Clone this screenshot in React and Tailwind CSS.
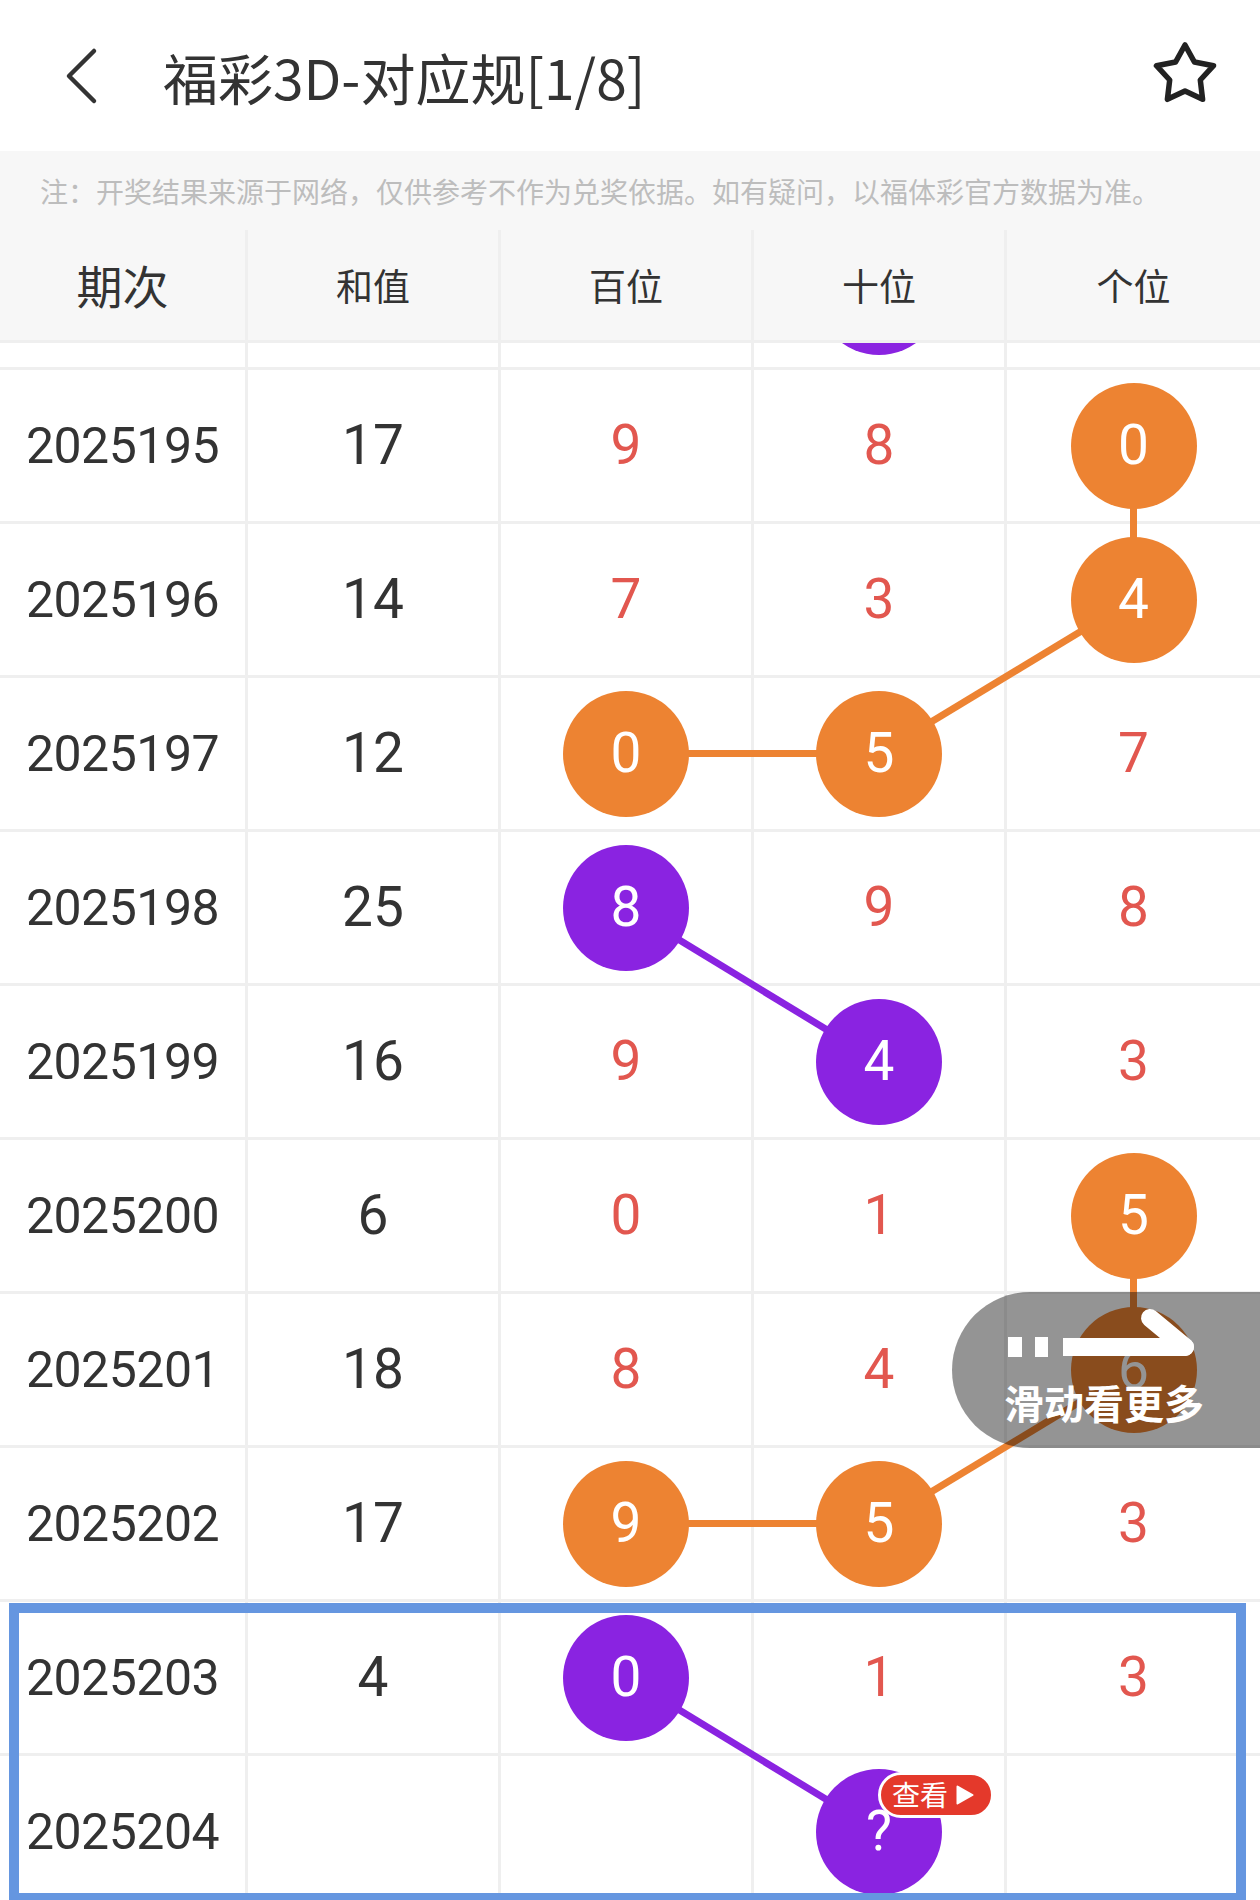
const CJK = "font-['Noto_Sans_CJK_SC',sans-serif]";
const NUM = "font-['Roboto','Noto_Sans_CJK_SC',sans-serif]";

// first row is scrolled under the header: only the bottom of its ball shows
const rows = [
  { id: "", key: "2025194", sum: "", cells: ["", { v: "", c: "p" }, ""] },
  { id: "2025195", sum: "17", cells: ["9", "8", { v: "0", c: "o" }] },
  { id: "2025196", sum: "14", cells: ["7", "3", { v: "4", c: "o" }] },
  { id: "2025197", sum: "12", cells: [{ v: "0", c: "o" }, { v: "5", c: "o" }, "7"] },
  { id: "2025198", sum: "25", cells: [{ v: "8", c: "p" }, "9", "8"] },
  { id: "2025199", sum: "16", cells: ["9", { v: "4", c: "p" }, "3"] },
  { id: "2025200", sum: "6", cells: ["0", "1", { v: "5", c: "o" }] },
  { id: "2025201", sum: "18", cells: ["8", "4", { v: "6", c: "o" }] },
  { id: "2025202", sum: "17", cells: [{ v: "9", c: "o" }, { v: "5", c: "o" }, "3"] },
  { id: "2025203", sum: "4", cells: [{ v: "0", c: "p" }, "1", "3"] },
  { id: "2025204", sum: "", cells: ["", { v: "?", c: "p", badge: true }, ""] },
];

// column centres and row pitch of the chart
const colX = [122.5, 373, 626, 879, 1133.5];
const rowY = (i) => 75.5 + 154 * i;

const links = [
  [4, 1, 4, 2, "o"],
  [4, 2, 3, 3, "o"],
  [3, 3, 2, 3, "o"],
  [2, 4, 3, 5, "p"],
  [4, 6, 4, 7, "o"],
  [4, 7, 3, 8, "o"],
  [3, 8, 2, 8, "o"],
  [2, 9, 3, 10, "p"],
];

const Ball = ({ v, c, badge }) => (
  <div
    className={`relative w-[126px] h-[126px] rounded-full flex items-center justify-center text-white text-[55px] leading-none ${
      c === "o" ? "bg-[#ed8332]" : "bg-[#8a23e1]"
    }`}
  >
    {v}
    {badge && (
      <div className="absolute left-[62px] top-[3px] w-[116px] h-[46px] rounded-full bg-[#e4392b] border-[3px] border-white flex items-center pl-[11px] gap-[8px]">
        <span className={`${CJK} text-[28px] leading-[1.2] text-white`}>查看</span>
        <svg width="18" height="20" viewBox="0 0 18 20">
          <path d="M1.5 1.5 L16.5 10 L1.5 18.5 Z" fill="#fff" stroke="#fff" strokeWidth="2" strokeLinejoin="round" />
        </svg>
      </div>
    )}
  </div>
);

const Cell = ({ children, last }) => (
  <div
    className={`flex items-center justify-center ${
      last ? "" : "border-r-[3px] border-[#efefef]"
    }`}
  >
    {children}
  </div>
);

export default function App() {
  return (
    <div className="relative w-[1260px] h-[1900px] overflow-hidden bg-white">
      {/* Header */}
      <div className="h-[151px] flex items-center pl-[60px] pr-[40px]">
        <svg width="40" height="60" viewBox="0 0 40 60">
          <path
            d="M34 5 L9 30 L34 55"
            fill="none"
            stroke="#333"
            strokeWidth="4.5"
            strokeLinecap="round"
            strokeLinejoin="round"
          />
        </svg>
        <div className={`${CJK} ml-[63px] text-[55px] leading-[1.2] text-[#333]`}>
          福彩3D-对应规[1/8]
        </div>
        <svg className="ml-auto mb-[6px]" width="70" height="70" viewBox="0 0 70 70">
          <polygon
            points="35,7 44.4,24 63.5,27.7 50.3,42 52.6,61.3 35,53 17.4,61.3 19.7,42 6.5,27.7 25.6,24"
            fill="none"
            stroke="#222"
            strokeWidth="5.5"
            strokeLinejoin="round"
          />
        </svg>
      </div>

      {/* Notice + table head */}
      <div className="bg-[#f7f7f7]">
        <div className={`${CJK} h-[79px] flex items-center pl-[40px] text-[28px] text-[#bdbdbd]`}>
          注：开奖结果来源于网络，仅供参考不作为兑奖依据。如有疑问，以福体彩官方数据为准。
        </div>
        <div
          className={`${CJK} grid grid-cols-[248px_253px_253px_253px_1fr] h-[113px] border-b-[3px] border-[#efefef] text-[#333]`}
        >
          <Cell>
            <span className="text-[46px] leading-[1.2]">期次</span>
          </Cell>
          <Cell>
            <span className="text-[37px] leading-[1.2]">和值</span>
          </Cell>
          <Cell>
            <span className="text-[37px] leading-[1.2]">百位</span>
          </Cell>
          <Cell>
            <span className="text-[37px] leading-[1.2]">十位</span>
          </Cell>
          <Cell last>
            <span className="text-[37px] leading-[1.2]">个位</span>
          </Cell>
        </div>
      </div>

      {/* Body */}
      <div className="relative h-[1557px] overflow-hidden">
        <div className="relative mt-[-127px]">
          <svg
            className="absolute left-0 top-0 pointer-events-none"
            width="1260"
            height="1694"
          >
            {links.map(([c1, r1, c2, r2, k], i) => (
              <line
                key={i}
                x1={colX[c1]}
                y1={rowY(r1)}
                x2={colX[c2]}
                y2={rowY(r2)}
                stroke={k === "o" ? "#ed8332" : "#8a23e1"}
                strokeWidth="7"
              />
            ))}
          </svg>
          {rows.map((r) => (
            <div
              key={r.key || r.id}
              className={`${NUM} grid grid-cols-[248px_253px_253px_253px_1fr] h-[154px] border-b-[3px] border-[#efefef]`}
            >
              <Cell>
                <span className="relative text-[50px] leading-none text-[#333] tracking-[-0.5px]">
                  {r.id}
                </span>
              </Cell>
              <Cell>
                <span className="relative text-[55px] leading-none text-[#333]">{r.sum}</span>
              </Cell>
              {r.cells.map((c, j) => (
                <Cell key={j} last={j === 2}>
                  {typeof c === "string" ? (
                    <span className="relative text-[55px] leading-none text-[#e2574f]">{c}</span>
                  ) : (
                    <Ball {...c} />
                  )}
                </Cell>
              ))}
            </div>
          ))}
        </div>
      </div>

      {/* Swipe hint */}
      <div className="absolute left-[952px] top-[1292px] w-[308px] h-[156px] rounded-l-full bg-[rgba(0,0,0,0.42)] flex flex-col pl-[48px] pt-[12px]">
        <svg width="200" height="62" viewBox="0 0 200 62">
          <rect x="8" y="33" width="14" height="20" fill="#fff" />
          <rect x="35" y="33" width="13" height="20" fill="#fff" />
          <line x1="63" y1="43" x2="186" y2="43" stroke="#fff" strokeWidth="18" />
          <line x1="150" y1="14" x2="185" y2="43" stroke="#fff" strokeWidth="18" strokeLinecap="round" />
          <circle cx="185" cy="43" r="9" fill="#fff" />
        </svg>
        <div className={`${CJK} mt-[12px] pl-[4px] text-[40px] leading-[1.2] font-bold text-white`}>
          滑动看更多
        </div>
      </div>

      {/* Highlight box */}
      <div className="absolute left-[9px] top-[1603px] w-[1237px] h-[300px] border-[10px] border-[#6596e0]" />
    </div>
  );
}
